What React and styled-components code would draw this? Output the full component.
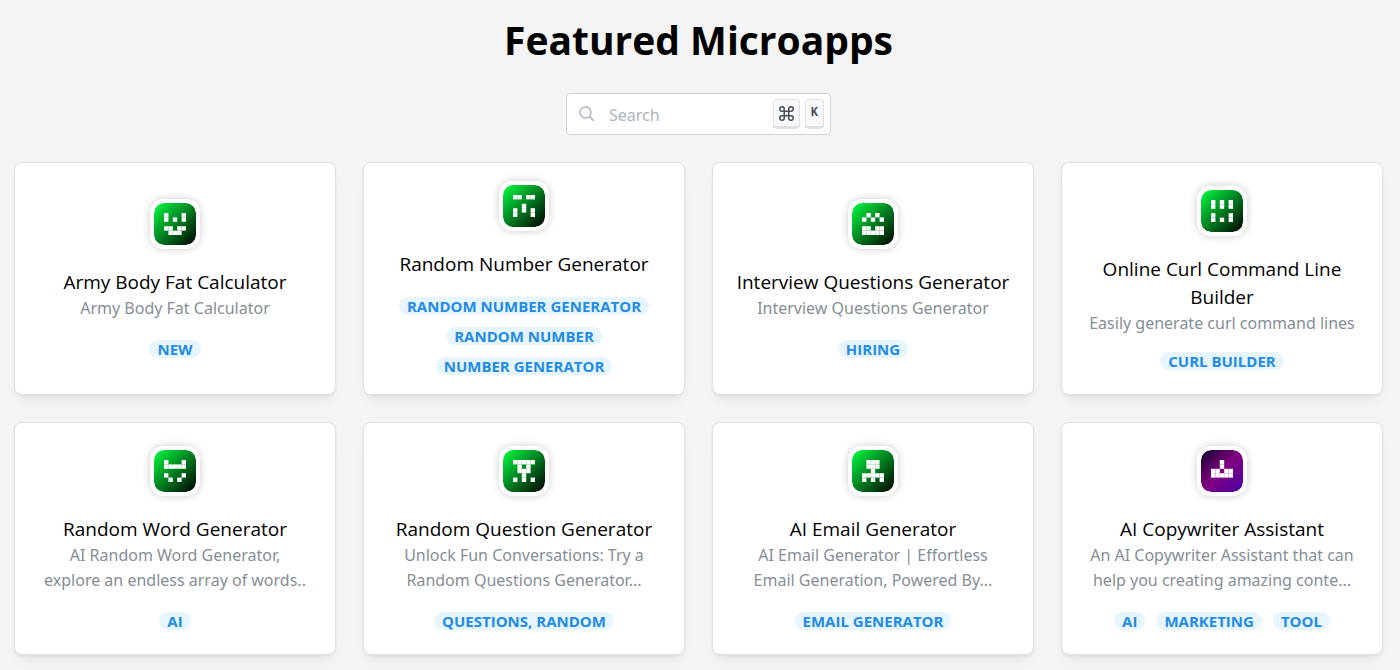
import React from "react";
import styled, { createGlobalStyle } from "styled-components";

const apps = [
  {
    title: "Army Body Fat Calculator",
    description: "Army Body Fat Calculator",
    tags: ["New"],
    pixels: ["1...1", "1.1.1", ".....", "11.11", ".111."],
  },
  {
    title: "Random Number Generator",
    tags: ["Random number generator", "Random number", "Number generator"],
    pixels: ["11.11", ".....", "..1..", "1.1.1", "1...1"],
  },
  {
    title: "Interview Questions Generator",
    description: "Interview Questions Generator",
    tags: ["Hiring"],
    pixels: [".1.1.", "1.1.1", ".....", "11.11", "11111"],
  },
  {
    title: "Online Curl Command Line Builder",
    description: "Easily generate curl command lines",
    tags: ["Curl builder"],
    pixels: ["1.1.1", "1.1.1", ".....", "1...1", "1.1.1"],
  },
  {
    title: "Random Word Generator",
    description: "AI Random Word Generator, explore an endless array of words..",
    tags: ["AI"],
    pixels: ["1...1", "11111", ".....", "1...1", ".1.1."],
  },
  {
    title: "Random Question Generator",
    description: "Unlock Fun Conversations: Try a Random Questions Generator...",
    tags: ["Questions, random"],
    pixels: ["11111", ".1.1.", ".111.", "..1..", "1.1.1"],
  },
  {
    title: "AI Email Generator",
    description: "AI Email Generator | Effortless Email Generation, Powered By...",
    tags: ["Email generator"],
    pixels: [".111.", ".111.", "..1..", "11111", "1.1.1"],
  },
  {
    title: "AI Copywriter Assistant",
    description: "An AI Copywriter Assistant that can help you creating amazing conte...",
    tags: ["AI", "Marketing", "Tool"],
    pixels: ["..1..", "..1..", "11.11", "11111", "....."],
    color: "purple",
  },
];

function PixelIcon({ pixels }) {
  return (
    <svg width="22" height="22" viewBox="0 0 50 50" aria-hidden="true">
      {pixels.map((row, y) =>
        row
          .split("")
          .map((cell, x) =>
            cell === "1" ? (
              <rect key={`${x}-${y}`} x={x * 10} y={y * 10} width="10" height="10" fill="#fff" />
            ) : null
          )
      )}
    </svg>
  );
}

function AppCard({ app }) {
  return (
    <Card>
      <AppIcon $color={app.color}>
        <PixelIcon pixels={app.pixels} />
      </AppIcon>
      <CardText>
        <CardTitle>{app.title}</CardTitle>
        {app.description && <Description>{app.description}</Description>}
      </CardText>
      <Tags>
        {app.tags.map((tag) => (
          <Tag key={tag}>{tag}</Tag>
        ))}
      </Tags>
    </Card>
  );
}

export default function App() {
  return (
    <Page>
      <GlobalStyle />
      <Heading>Featured Microapps</Heading>
      <SearchBox>
        <svg width="16" height="16" viewBox="0 0 16 16" fill="none" stroke="#adb5bd" aria-hidden="true">
          <circle cx="6.5" cy="6.5" r="5.5" strokeWidth="1.4" />
          <path d="M10.6 10.6L15 15" strokeWidth="1.6" />
        </svg>
        <SearchInput type="text" placeholder="Search" aria-label="Search" />
        <Keys>
          <Kbd>
            <svg width="15" height="15" viewBox="2 0 20 20" fill="none" stroke="#495057" strokeWidth="2" aria-label="Command">
              <path d="M15 4v12a3 3 0 1 0 3-3H6a3 3 0 1 0 3 3V4a3 3 0 1 0-3 3h12a3 3 0 1 0-3-3" />
            </svg>
          </Kbd>
          <Kbd>K</Kbd>
        </Keys>
      </SearchBox>
      <Grid>
        {apps.map((app) => (
          <AppCard key={app.title} app={app} />
        ))}
      </Grid>
    </Page>
  );
}

const GlobalStyle = createGlobalStyle`
  * {
    box-sizing: border-box;
  }

  body {
    margin: 0;
    background: #f4f4f4;
    color: #000;
    font-family: "Noto Sans", sans-serif;
    font-size: 16px;
  }
`;

const Page = styled.main`
  display: flex;
  flex-direction: column;
  padding: 12px 17px 15px 14px;
`;

const Heading = styled.h1`
  margin: 0;
  font-family: "Open Sans", sans-serif;
  font-size: 39px;
  font-weight: 700;
  line-height: 56px;
  text-align: center;
`;

const SearchBox = styled.div`
  display: flex;
  align-items: center;
  align-self: center;
  width: 265px;
  height: 42px;
  margin: 25px 0 27px;
  padding: 0 6px 0 12px;
  background: #fff;
  border: 1px solid #ced4da;
  border-radius: 4px;
`;

const SearchInput = styled.input`
  flex: 1;
  min-width: 0;
  padding: 1px 0 0 14px;
  border: 0;
  outline: 0;
  background: none;
  font: inherit;

  &::placeholder {
    color: #adb5bd;
    opacity: 1;
  }
`;

const Keys = styled.div`
  display: flex;
  gap: 5px;
`;

const Kbd = styled.kbd`
  display: flex;
  align-items: center;
  justify-content: center;
  height: 30px;
  padding: 0 5px;
  background: #f8f9fa;
  border: 1px solid #dee2e6;
  border-bottom-width: 3px;
  border-radius: 4px;
  color: #495057;
  font-family: "Liberation Mono", monospace;
  font-size: 12px;
  font-weight: 700;
`;

const Grid = styled.section`
  display: grid;
  grid-template-columns: repeat(4, 1fr);
  gap: 27px;
`;

const Card = styled.article`
  display: flex;
  flex-direction: column;
  align-items: center;
  justify-content: center;
  gap: 19px;
  min-height: 233px;
  padding: 16px 22px 17px;
  background: #fff;
  border: 1px solid #dee2e6;
  border-radius: 8px;
  box-shadow: 0 1px 3px rgba(0, 0, 0, 0.05), 0 10px 15px -5px rgba(0, 0, 0, 0.05),
    0 7px 7px -5px rgba(0, 0, 0, 0.04);
  text-align: center;
`;

const AppIcon = styled.div`
  display: flex;
  align-items: center;
  justify-content: center;
  width: 50px;
  height: 50px;
  border: 4px solid #fff;
  border-radius: 14px;
  background: ${(props) =>
    props.$color === "purple"
      ? "linear-gradient(135deg, #14002e, #800080 50%, #4b00a8) padding-box"
      : "linear-gradient(135deg, #00ff40, #000) padding-box"};
  box-shadow: 0 0 8px rgba(0, 0, 0, 0.2);
`;

const CardText = styled.div`
  max-height: 78px;
  overflow: hidden;
`;

const CardTitle = styled.h2`
  margin: 0;
  font-family: "Open Sans", sans-serif;
  font-size: 19px;
  font-weight: 400;
  line-height: 28px;
`;

const Description = styled.p`
  margin: 0;
  padding: 0 4px;
  color: #868e96;
  font-size: 16px;
  line-height: 25px;
`;

const Tags = styled.div`
  display: flex;
  flex-wrap: wrap;
  justify-content: center;
  gap: 12px 11px;
`;

const Tag = styled.span`
  padding: 0 8px;
  background: #e7f5ff;
  border-radius: 32px;
  color: #228be6;
  font-family: "Open Sans", sans-serif;
  font-size: 15px;
  font-weight: 700;
  line-height: 18px;
  text-transform: uppercase;
`;
